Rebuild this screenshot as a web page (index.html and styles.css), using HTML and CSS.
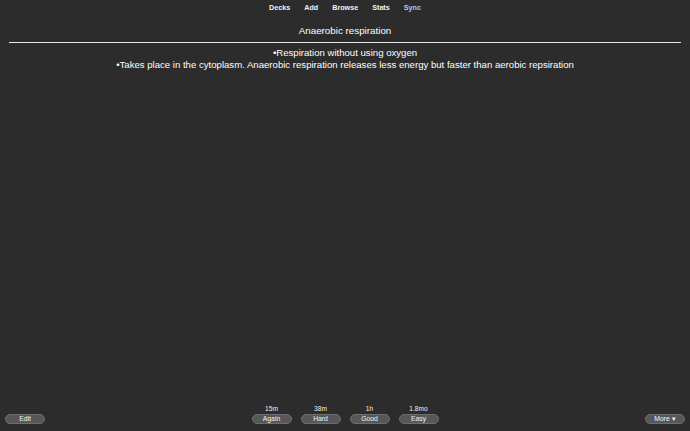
FILE: index.html
```html
<!DOCTYPE html>
<html>
<head>
<meta charset="utf-8">
<link rel="stylesheet" href="styles.css">
</head>
<body>
<div class="page">
  <nav class="toolbar">
    <a class="nav-link">Decks</a>
    <a class="nav-link">Add</a>
    <a class="nav-link">Browse</a>
    <a class="nav-link">Stats</a>
    <a class="nav-link sync">Sync</a>
  </nav>
  <main class="card">
    <div class="front">Anaerobic respiration</div>
    <hr class="answer-rule">
    <div class="back">
      <div>•Respiration without using oxygen</div>
      <div>•Takes place in the cytoplasm. Anaerobic respiration releases less energy but faster than aerobic repsiration</div>
    </div>
  </main>
  <footer class="bottom-bar">
    <div class="side left"><button class="btn">Edit</button></div>
    <div class="answers">
      <div class="answer"><span class="due">15m</span><button class="btn">Again</button></div>
      <div class="answer"><span class="due">38m</span><button class="btn">Hard</button></div>
      <div class="answer"><span class="due">1h</span><button class="btn">Good</button></div>
      <div class="answer"><span class="due">1.8mo</span><button class="btn">Easy</button></div>
    </div>
    <div class="side right"><button class="btn">More ▾</button></div>
  </footer>
</div>
</body>
</html>
```

FILE: styles.css
```css
html, body {
  margin: 0;
  padding: 0;
  height: 100%;
  background: #2c2c2c;
  color: #ffffff;
  font-family: "Liberation Sans", Arial, sans-serif;
  -webkit-font-smoothing: antialiased;
}
.page {
  display: flex;
  flex-direction: column;
  height: 431px;
}
.toolbar {
  display: flex;
  justify-content: center;
  gap: 14px;
  height: 15px;
  align-items: center;
}
.nav-link {
  font-size: 7.2px;
  font-weight: bold;
  color: #f2f2f2;
  text-decoration: none;
}
.nav-link.sync {
  color: #9fd0f7;
}
.card {
  flex: 1;
  padding: 10px 9px 0 9px;
  text-align: center;
  font-size: 9.6px;
  line-height: 12px;
}
.front {
  height: 12px;
  font-size: 9.8px;
}
.answer-rule {
  margin: 5px 0 4px 0;
  border: none;
  border-top: 1px solid #e8e8e8;
  height: 0;
}
.back {
  line-height: 12px;
}
.bottom-bar {
  display: flex;
  align-items: flex-end;
  justify-content: space-between;
  padding: 0 5px 7px 5px;
  height: 24px;
}
.side {
  width: 40px;
  display: flex;
}
.answers {
  display: flex;
  gap: 9px;
}
.answer {
  display: flex;
  flex-direction: column;
  align-items: center;
  gap: 1px;
}
.due {
  font-size: 6.6px;
  line-height: 8px;
  color: #f0f0f0;
}
.btn {
  width: 40px;
  height: 10px;
  padding: 0;
  border: 1px solid #6e6e6e;
  border-radius: 5px;
  background: #575757;
  color: #f4f4f4;
  font-family: "Liberation Sans", Arial, sans-serif;
  font-size: 6.8px;
  line-height: 8px;
}
```
